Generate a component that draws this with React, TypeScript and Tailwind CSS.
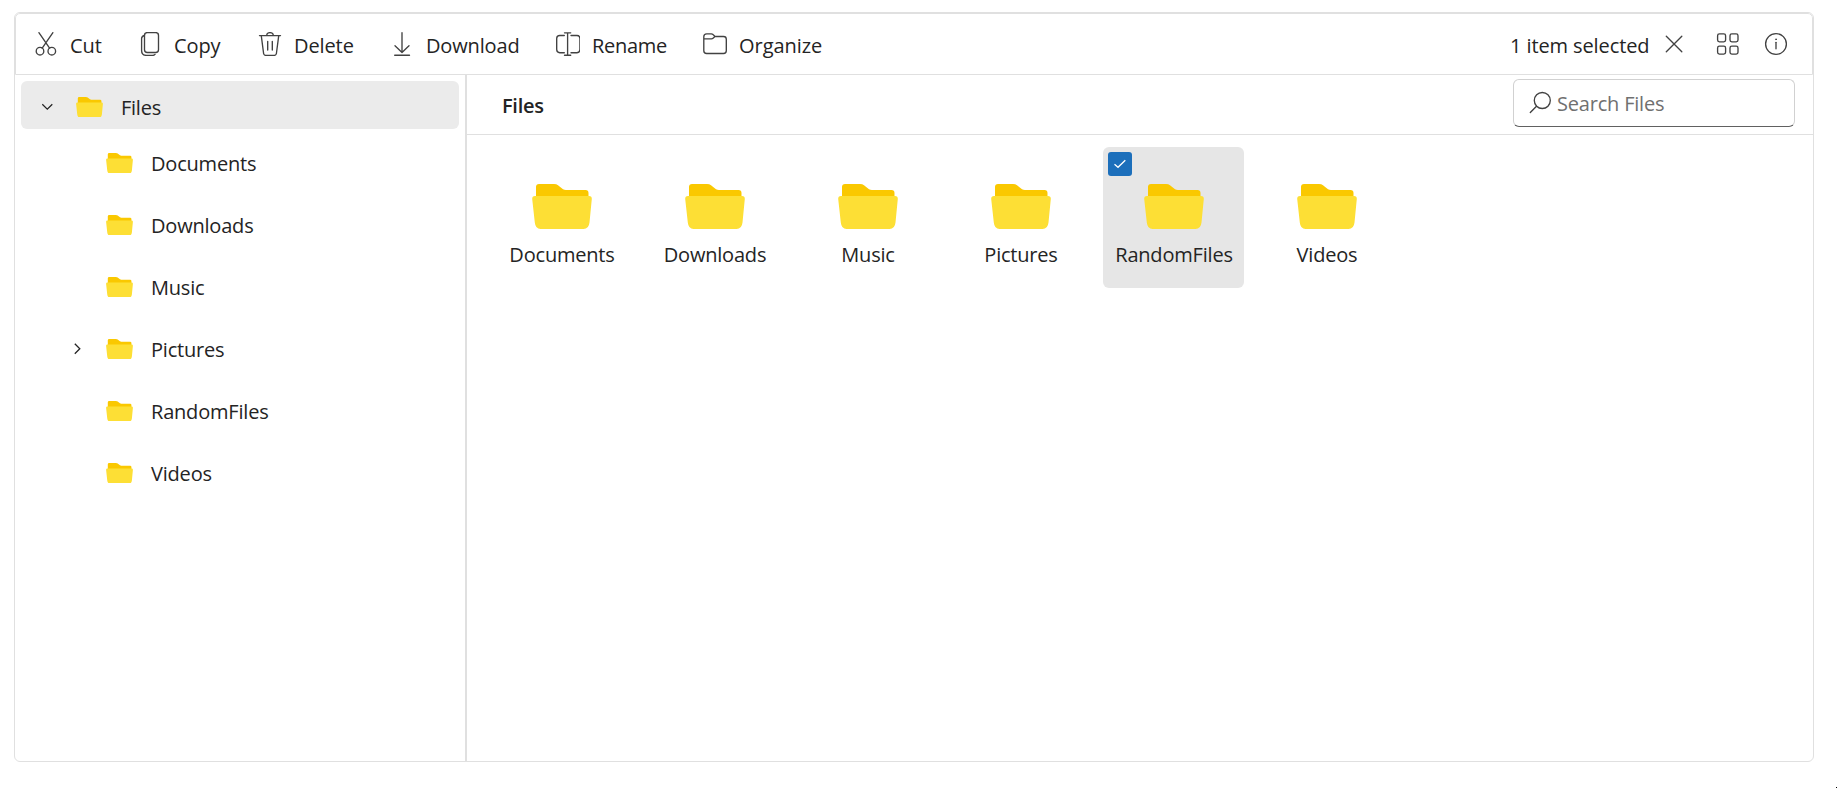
import type { ReactNode } from "react";

type IconProps = { className?: string; children: ReactNode };

function Icon({ className = "", children }: IconProps) {
  return (
    <svg
      viewBox="0 0 24 24"
      className={`size-6 shrink-0 ${className}`}
      fill="none"
      stroke="#424242"
      strokeWidth="1.35"
      strokeLinecap="round"
      strokeLinejoin="round"
    >
      {children}
    </svg>
  );
}

const actions: { label: string; width: string; tracking: string; icon: ReactNode }[] = [
  {
    label: "Cut",
    width: "w-[104px]",
    tracking: "tracking-[-0.1px]",
    icon: (
      <>
        <circle cx="6" cy="19.2" r="3.8" />
        <circle cx="17.8" cy="19.2" r="3.8" />
        <path d="M4.9.7 15.6 16.1M18.9.7 8.2 16.1" />
      </>
    ),
  },
  {
    label: "Copy",
    width: "w-[120px]",
    tracking: "tracking-[-0.1px]",
    icon: (
      <>
        <rect x="6.5" y="0.6" width="14" height="19.9" rx="2.8" />
        <path d="M6.3 3.5C4.6 4 3.6 5.2 3.6 6.5V18.5Q3.6 23.400 8.5 23.400H14.5Q16.3 23.400 17 22.400" />
      </>
    ),
  },
  {
    label: "Delete",
    width: "w-[132px]",
    tracking: "tracking-[-0.1px]",
    icon: (
      <>
        <path d="M1.5 3.6H22.5M8.500 3.500Q8.900.6 12 .6T15.500 3.500" />
        <path d="M3.300 3.800 5.600 21.500Q5.900 23.400 7.800 23.400H16.200Q18.100 23.400 18.400 21.500L20.700 3.800M9.700 9.300V18M14.300 9.300V18" />
      </>
    ),
  },
  {
    label: "Download",
    width: "w-[166px]",
    tracking: "tracking-[-0.15px]",
    icon: <path d="M12 .7V20.500M5 13.800 12 20.500 19 13.800M4.700 23.200H19.500" />,
  },
  {
    label: "Rename",
    width: "w-[147px]",
    tracking: "tracking-[-0.3px]",
    icon: (
      <>
        <path d="M8.300 3.500H3.800Q.7 3.500.7 6.600V17.600Q.7 20.700 3.800 20.700H8.300M15 3.500H21Q23.900 3.500 23.900 6.600V17.600Q23.900 20.700 21 20.700H15" />
        <path d="M11.600.8V23.200M8.500.8H14.700M8.500 23.200H14.700" />
      </>
    ),
  },
  {
    label: "Organize",
    width: "w-[130px]",
    tracking: "tracking-[-0.05px]",
    icon: (
      <path d="M.8 6.800V4.800Q.8 1.900 3.700 1.900H8.300Q9.300 1.900 10 2.600L12 4.500H20.500Q23.300 4.500 23.300 7.300V18.700Q23.300 21.500 20.500 21.500H3.600Q.8 21.500.8 18.700V6.800H8.400Q9.400 6.800 10 6.200L12 4.500" />
    ),
  },
];

function Folder({ className }: { className: string }) {
  return (
    <svg viewBox="0 0 60 45" className={`shrink-0 ${className}`} preserveAspectRatio="none">
      <path fill="#fac800" d="M4 13V3Q4 0 7 0H22Q24.500 0 26 1.200L31 5.200Q32.300 6 34 6H53.500Q56.500 6 56.500 9V13Z" />
      <path
        fill="#fddf35"
        d="M3 12H57Q60 12 59.800 15L57.500 38.500Q56.800 45 51.500 45H8.500Q3.500 45 2.800 38.500L.2 15Q0 12 3 12Z"
      />
    </svg>
  );
}

const folders = ["Documents", "Downloads", "Music", "Pictures", "RandomFiles", "Videos"];

export default function App() {
  return (
    <div className="flex h-[788px] w-full flex-col bg-white pt-3 pl-3.5 font-['Open_Sans','Noto_Sans',sans-serif] text-xl leading-7 text-[#242424]">
      <div className="flex h-[750px] w-[1800px] flex-col overflow-hidden rounded-[6px] border border-[#e0e0e0]">
        <header className="flex h-[62px] shrink-0 items-center rounded-t-[5px] border border-[#e0e0e0] pl-[18px]">
          {actions.map((action) => (
            <button key={action.label} className={`flex shrink-0 items-center gap-3 ${action.width}`}>
              <Icon>{action.icon}</Icon>
              <span className={`pt-[3px] ${action.tracking}`}>{action.label}</span>
            </button>
          ))}
          <div className="ml-auto flex items-center pr-6">
            <span className="w-[140px] pt-[3px] tracking-[-0.1px] whitespace-nowrap">1 item selected</span>
            <Icon className="ml-3">
              <path d="M4.300 4.300 19.800 19.800M19.800 4.300 4.300 19.800" />
            </Icon>
            <Icon className="ml-[30px]">
              <rect x="1.600" y="1.900" width="8" height="8" rx="1.800" />
              <rect x="14" y="1.900" width="8" height="8" rx="1.800" />
              <rect x="1.600" y="14.100" width="8" height="8" rx="1.800" />
              <rect x="14" y="14.100" width="8" height="8" rx="1.800" />
            </Icon>
            <Icon className="ml-6">
              <circle cx="12" cy="12" r="10.400" />
              <path d="M12 10.300V16.700" />
              <circle cx="12" cy="7.300" r=".5" fill="#424242" strokeWidth=".8" />
            </Icon>
          </div>
        </header>

        <div className="flex min-h-0 flex-1">
          <aside className="w-[452px] shrink-0 border-r-2 border-[#e0e0e0] pt-1.5 pl-1.5">
            <div className="flex h-12 w-[438px] items-center rounded-[6px] bg-[#ebebeb] pl-5">
              <svg viewBox="0 0 12 12" className="mt-1 size-3 shrink-0" fill="none" stroke="#242424" strokeWidth="1.3">
                <path d="M1.300 3.300 6.300 8.100 11.300 3.300" />
              </svg>
              <Folder className="mt-1 ml-[23px] h-[20.5px] w-[27px]" />
              <span className="mt-1.5 ml-[18px] tracking-[-0.25px]">Files</span>
            </div>
            <div className="mt-[3px]">
              {folders.map((name) => (
                <div key={name} className="flex h-[62px] items-center pl-[50px]">
                  <span className="flex w-[35px] shrink-0">
                    {name === "Pictures" && (
                      <svg viewBox="0 0 12 12" className="size-3" fill="none" stroke="#242424" strokeWidth="1.3">
                        <path d="M3.800.8 8.800 5.800 3.800 10.800" />
                      </svg>
                    )}
                  </span>
                  <Folder className="h-[20.5px] w-[27px]" />
                  <span className="ml-[18px] pt-0.5 tracking-[-0.2px]">{name}</span>
                </div>
              ))}
            </div>
          </aside>

          <main className="flex min-w-0 flex-1 flex-col">
            <div className="flex h-[60px] shrink-0 items-start justify-between border-b border-[#e0e0e0] pr-[18px] pl-[35px]">
              <span className="pt-[17px] font-semibold tracking-[-0.3px]">Files</span>
              <label className="mt-1 flex h-12 w-[282px] items-center rounded-[6px] border border-[#d1d1d1] border-b-[#616161] pl-[15px]">
                <Icon>
                  <circle cx="13.300" cy="9.500" r="8" />
                  <path d="M7.500 15.200 1.300 21.500" />
                </Icon>
                <input
                  className="ml-1 w-[220px] bg-transparent pt-0.5 tracking-[-0.2px] outline-none placeholder:text-[#707070]"
                  placeholder="Search Files"
                />
              </label>
            </div>
            <div className="flex gap-3 pt-3 pl-6">
              {folders.map((name) => {
                const selected = name === "RandomFiles";
                return (
                  <div
                    key={name}
                    className={`relative flex size-[141px] flex-col items-center rounded-[6px] pt-[37px] ${selected ? "bg-[#e6e6e6]" : ""}`}
                  >
                    {selected && (
                      <span className="absolute top-[5px] left-[5px] flex size-6 items-center justify-center rounded-[3px] bg-[#1c6fbb]">
                        <svg viewBox="0 0 12 12" className="size-3" fill="none" stroke="white" strokeWidth="1.3">
                          <path d="M.5 6.300 4 9.300 11.300 2.200" />
                        </svg>
                      </span>
                    )}
                    <Folder className="h-[45px] w-[60px]" />
                    <span className="mt-3 pl-px tracking-[-0.2px]">{name}</span>
                  </div>
                );
              })}
            </div>
          </main>
        </div>
      </div>
      <div className="mt-auto size-px self-end bg-black" />
    </div>
  );
}
